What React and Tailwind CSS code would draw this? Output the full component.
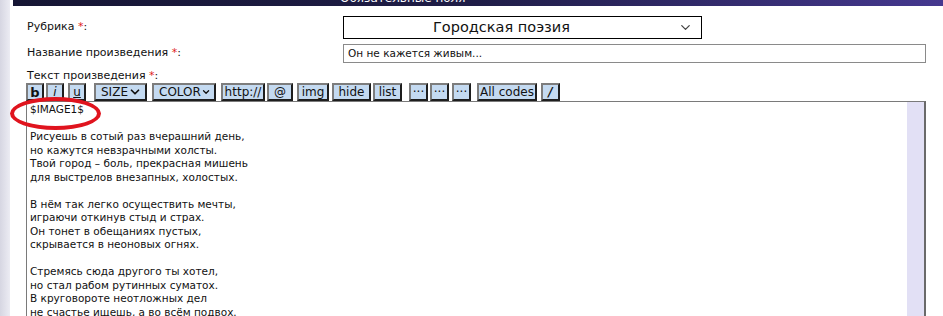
import { ChevronDown } from 'lucide-react'

const font = { fontFamily: 'Tahoma, "DejaVu Sans", Verdana, sans-serif' }

const stanzas = [
  ['Рисуешь в сотый раз вчерашний день,', 'но кажутся невзрачными холсты.', 'Твой город – боль, прекрасная мишень', 'для выстрелов внезапных, холостых.'],
  ['В нём так легко осуществить мечты,', 'играючи откинув стыд и страх.', 'Он тонет в обещаниях пустых,', 'скрывается в неоновых огнях.'],
  ['Стремясь сюда другого ты хотел,', 'но стал рабом рутинных суматох.', 'В круговороте неотложных дел', 'не счастье ищешь, а во всём подвох.'],
]

function Btn({ children, w, className = '' }) {
  return (
    <div
      className={`h-[18px] flex items-center justify-center bg-[#c4daf1] border-2 border-t-[#7d7d7d] border-l-[#7d7d7d] border-r-[#1e1e1e] border-b-[#1e1e1e] text-[12px] text-[#111] leading-none ${className}`}
      style={{ width: w }}
    >
      {children}
    </div>
  )
}

function Sel({ label, w }) {
  return (
    <div
      className="h-[18px] flex items-center justify-between pl-[5px] pr-[3px] bg-[#c4daf1] border-2 border-t-[#7d7d7d] border-l-[#7d7d7d] border-r-[#1e1e1e] border-b-[#1e1e1e] text-[12px] text-[#111] leading-none"
      style={{ width: w }}
    >
      <span>{label}</span>
      <ChevronDown size={14} strokeWidth={3} />
    </div>
  )
}

export default function App() {
  return (
    <div className="relative w-[943px] h-[316px] overflow-hidden bg-white flex items-start" style={font}>
      <div className="w-[10px] h-[316px] shrink-0 bg-[linear-gradient(to_right,#d6d6e2,#ececf3)]" />
      <div className="w-[3px] shrink-0" />
      <div className="flex-1">
        <div className="h-[6px] bg-[linear-gradient(to_right,#161634,#1f1d47_50%,#45388f)] overflow-hidden relative">
          <div className="absolute left-[327px] top-[-8px] text-white text-[12px] leading-[12px]">Обязательные поля</div>
        </div>
        <div className="pl-[14px] pr-[17px]">
          <div className="flex items-center mt-[10px] h-[23px]">
            <div className="w-[316px] text-[11px] text-[#111]">
              Рубрика <span className="text-[#e02020]">*</span>:
            </div>
            <div className="w-[359px] h-[23px] border border-black flex items-center relative pr-[42px]">
              <span className="flex-1 text-center text-[14.5px] text-[#111]">Городская поэзия</span>
              <ChevronDown size={15} strokeWidth={2} className="absolute right-[8px] text-[#444]" />
            </div>
          </div>
          <div className="flex items-center mt-[5px] h-[19px]">
            <div className="w-[316px] text-[11px] text-[#111]">
              Название произведения <span className="text-[#e02020]">*</span>:
            </div>
            <div className="flex-1 h-[19px] border border-[#8a8a8a] flex items-center pl-[4px] text-[10.5px] text-[#111]">
              Он не кажется живым...
            </div>
          </div>
          <div className="mt-[6px] text-[11px] text-[#111] leading-[14px]">
            Текст произведения <span className="text-[#e02020]">*</span>:
          </div>
          <div className="flex items-center gap-[2px] ml-[-1px] h-[18px]">
            <Btn w={18} className="font-bold text-[13px]">b</Btn>
            <Btn w={18} className="italic">i</Btn>
            <Btn w={18} className="ml-[2px] underline">u</Btn>
            <div className="ml-[6px]"><Sel label="SIZE" w={53} /></div>
            <div className="ml-[3px]"><Sel label="COLOR" w={64} /></div>
            <Btn w={44} className="ml-[3px]">http://</Btn>
            <Btn w={26}>@</Btn>
            <Btn w={32} className="ml-[2px]">img</Btn>
            <Btn w={39} className="ml-[1px]">hide</Btn>
            <Btn w={29}>list</Btn>
            <Btn w={19} className="ml-[5px]">···</Btn>
            <Btn w={19}>···</Btn>
            <Btn w={19} className="ml-[1px]">···</Btn>
            <Btn w={60} className="ml-[4px]">All codes</Btn>
            <Btn w={19} className="ml-[2px] font-bold italic">/</Btn>
          </div>
          <div className="ml-[-1px] flex h-[240px] border-t border-l border-r-2 border-[#7a7a7a] border-r-[#6a6a6a]">
            <div className="flex-1 pl-[3px] pt-[1px] text-[10.5px] leading-[13.5px] text-[#111]">
              <div>$IMAGE1$</div>
              {stanzas.map((s, i) => (
                <div key={i} className="mt-[13.5px]">
                  {s.map((l) => (
                    <div key={l}>{l}</div>
                  ))}
                </div>
              ))}
            </div>
            <div className="w-[17px] bg-[#e2e0f5]" />
          </div>
        </div>
      </div>
      <div className="absolute left-[10px] top-[97px] w-[91px] h-[33px] rounded-[50%] border-[4px] border-[#e0141e]" />
    </div>
  )
}
